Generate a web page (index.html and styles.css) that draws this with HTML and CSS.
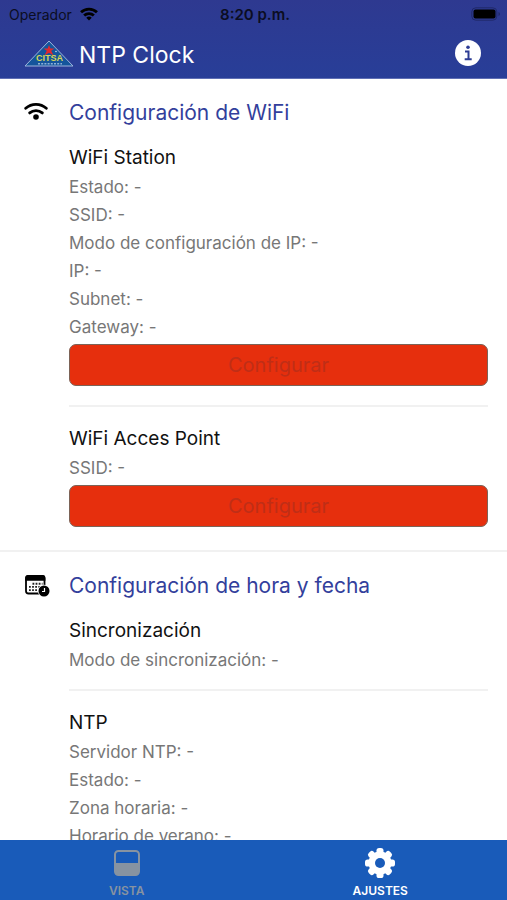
FILE: index.html
```html
<!DOCTYPE html>
<html lang="es">
<head>
<meta charset="utf-8">
<meta name="viewport" content="width=device-width, initial-scale=1">
<title>NTP Clock</title>
<link rel="stylesheet" href="styles.css">
</head>
<body>
<header class="top">
  <div class="status">
    <div class="carrier">
      <span>Operador</span>
      <svg width="18" height="14" viewBox="0 0 26 20" fill="none" stroke="currentColor" stroke-width="4"><path d="M1.500 7.500a16.500 16.500 0 0 1 23 0M6 12.300a10 10 0 0 1 14 0"/><path d="M13 19.500l-4-4a5.700 5.700 0 0 1 8 0z" fill="currentColor" stroke="none"/></svg>
    </div>
    <time class="time">8:20 p.m.</time>
    <svg class="battery" width="30" height="14" viewBox="0 0 30 14"><rect x=".8" y=".8" width="25" height="12.400" rx="4" fill="none" stroke="#20296a"/><rect x="2.500" y="2.500" width="22" height="9" rx="2" fill="#000"/><path d="M27.500 5v4q1.500-.5 1.500-2t-1.500-2z" fill="#20296a"/></svg>
  </div>
  <div class="toolbar">
    <svg class="logo" width="50" height="27" viewBox="0 0 50 27"><path d="M25 1 49 26H1z" fill="#14559c" stroke="#9db4dc" stroke-width="1"/><path d="M25 5l1.400 3.500h4.100l-3.300 2.300 2.300 4.700-4.500-2.800-4.500 2.800 2.300-4.700-3.300-2.300h4.100z" fill="#e0282f"/><text x="25.500" y="21" text-anchor="middle" class="logo-name">CITSA</text><path d="M14 23.800h24" stroke="#8eb0d6" stroke-width="1.400" stroke-dasharray="2 1.200"/><circle cx="32" cy="11.500" r=".8" fill="#c9d8ee"/></svg>
    <h1>NTP Clock</h1>
    <button class="info" type="button" aria-label="Información">
      <svg width="26" height="26" viewBox="0 0 26 26"><circle cx="13" cy="13" r="13" fill="#fff"/><circle cx="13" cy="7.200" r="1.800" fill="#2d3c94"/><path d="M10 11.500h3.500v7.500M9.700 19.200h7" fill="none" stroke="#2d3c94" stroke-width="2"/></svg>
    </button>
  </div>
</header>

<main>
  <section class="group">
    <svg class="group-icon" width="24" height="18" viewBox="0 0 24 18" fill="none" stroke="#000" stroke-width="2.800" stroke-linecap="round"><path d="M1.700 6.300a15.500 15.500 0 0 1 20.600 0M5.700 10.900a9.600 9.600 0 0 1 12.600 0"/><circle cx="12" cy="15" r="2.800" fill="#000" stroke="none"/></svg>
    <div class="content">
      <h2>Configuración de WiFi</h2>
      <div class="block">
        <h3>WiFi Station</h3>
        <p>Estado: -</p>
        <p>SSID: -</p>
        <p>Modo de configuración de IP: -</p>
        <p>IP: -</p>
        <p>Subnet: -</p>
        <p>Gateway: -</p>
        <button class="configure" type="button" disabled>Configurar</button>
      </div>
      <div class="block">
        <h3>WiFi Acces Point</h3>
        <p>SSID: -</p>
        <button class="configure" type="button" disabled>Configurar</button>
      </div>
    </div>
  </section>

  <section class="group">
    <svg class="group-icon" width="26" height="22" viewBox="0 0 26 22"><rect x="2" y="1" width="18.500" height="17.500" rx="2.500" fill="#fff" stroke="#000" stroke-width="1.800"/><path d="M1.200 5.800V3Q1.200.1 4 .1H18.500q2.900 0 2.900 2.900v2.800z" fill="#000"/><path d="M8.500 8.700h10M5 11.900h13M5 15.100h9" stroke="#222" stroke-width="1.900" stroke-dasharray="1.800 1.300"/><circle cx="20" cy="16" r="6.200" fill="#fff"/><circle cx="20" cy="16" r="5.500" fill="#000"/><path d="M20.500 13v3.500H18" fill="none" stroke="#fff" stroke-width="1.200"/></svg>
    <div class="content">
      <h2>Configuración de hora y fecha</h2>
      <div class="block">
        <h3>Sincronización</h3>
        <p>Modo de sincronización: -</p>
      </div>
      <div class="block">
        <h3>NTP</h3>
        <p>Servidor NTP: -</p>
        <p>Estado: -</p>
        <p>Zona horaria: -</p>
        <p>Horario de verano: -</p>
      </div>
    </div>
  </section>
</main>

<nav class="tabs">
  <a href="#vista">
    <svg width="30" height="30" viewBox="0 0 30 30"><rect x="3" y="3" width="24" height="24" rx="3.500" fill="none" stroke="currentColor" stroke-width="2"/><path d="M3 15h24v9q0 3-3 3H6q-3 0-3-3z" fill="currentColor"/></svg>
    <span>VISTA</span>
  </a>
  <a href="#ajustes" class="active" aria-current="page">
    <svg width="30" height="30" viewBox="0 0 30 30"><g fill="currentColor"><g id="teeth"><rect x="11.500" y="0" width="7" height="30" rx="2.600"/><rect x="0" y="11.500" width="30" height="7" rx="2.600"/></g><use href="#teeth" transform="rotate(45 15 15)"/><circle cx="15" cy="15" r="11.500"/></g><circle cx="15" cy="15" r="5" fill="#195bb9"/></svg>
    <span>AJUSTES</span>
  </a>
</nav>
</body>
</html>
```
FILE: styles.css
```css
* { box-sizing: border-box; }

body {
  display: flex;
  flex-direction: column;
  height: 100vh;
  margin: 0;
  background: #fff;
  color: #111;
  font-family: Inter, "Liberation Sans", sans-serif;
}

h1, h2, h3, p { margin: 0; font-weight: 400; }
svg { display: block; flex: none; }

.top {
  flex: none;
  background: linear-gradient(#2e3990, #283e98);
  border-bottom: 1px solid #5f6fb4;
}

.status {
  display: grid;
  grid-template-columns: 1fr auto 1fr;
  align-items: center;
  height: 28px;
  padding: 0 6px 0 9px;
  color: #0b0d22;
  font-size: 15px;
}
.carrier { display: flex; align-items: center; gap: 8px; font-size: 14px; }
.carrier svg { color: #000; }
.time { font-weight: 600; }
.battery { justify-self: end; }

.toolbar {
  display: flex;
  align-items: center;
  height: 50px;
  padding: 0 26px 0 24px;
}
.toolbar h1 {
  flex: 1;
  padding-top: 4px;
  margin-left: 5px;
  color: #fff;
  font-size: 23px;
  line-height: 30px;
}
.logo-name {
  fill: #d8d655;
  font-family: "Liberation Sans", sans-serif;
  font-size: 9px;
  font-weight: 700;
}
.info { padding: 0; border: 0; background: none; }

main {
  flex: 1;
  min-height: 0;
  overflow-y: auto;
  scrollbar-width: none;
}

.group {
  display: grid;
  grid-template-columns: 45px 1fr;
  padding: 19px 19px 4px 24px;
  border-bottom: 2px solid #f1f1f1;
}
.group-icon { margin-top: 4px; }
.group h2 {
  margin-bottom: 15px;
  color: #333f9c;
  font-size: 21px;
  line-height: 30px;
}
.block { padding-bottom: 15px; }
.block + .block { padding-top: 17px; border-top: 2px solid #f1f1f1; }
.block h3 { font-size: 19px; line-height: 30px; }
.block p { color: #777; font-size: 17px; line-height: 28px; }

.configure {
  display: block;
  width: 100%;
  height: 42px;
  margin: 3px 0 4px;
  border: 1px solid #7c6357;
  border-radius: 7px;
  background: #e62f0d;
  color: #bf2e17;
  font-family: inherit;
  font-size: 20px;
}

.tabs {
  display: grid;
  grid-template-columns: 1fr 1fr;
  flex: none;
  height: 60px;
  background: #195bb9;
}
.tabs a {
  display: flex;
  flex-direction: column;
  align-items: center;
  gap: 5px;
  padding-top: 8px;
  color: #8793a1;
  font-size: 12px;
  font-weight: 600;
  line-height: 16px;
  text-decoration: none;
}
.tabs .active { color: #fff; }
```
